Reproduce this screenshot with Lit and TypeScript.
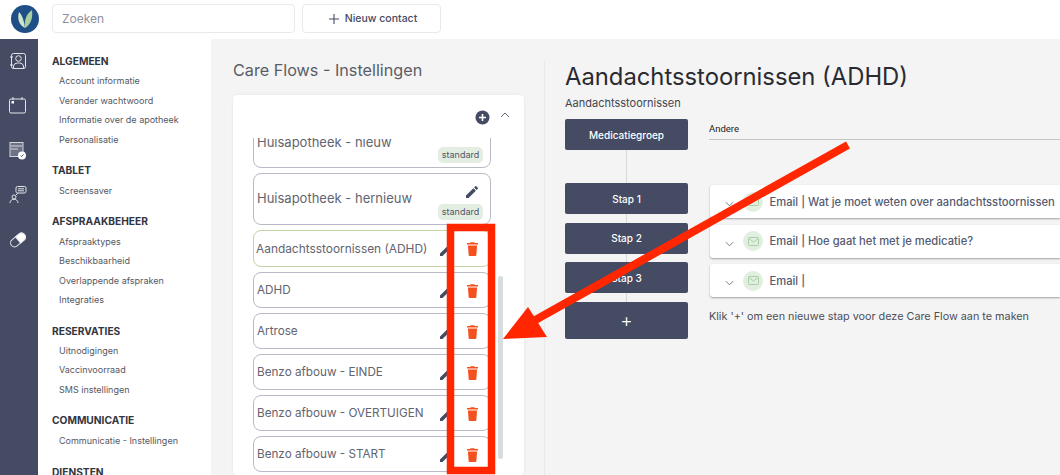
import { LitElement, html, css, svg } from "lit";
import { customElement } from "lit/decorators.js";

// sidebar content
const MENU = [
  { title: "ALGEMEEN", items: ["Account informatie", "Verander wachtwoord", "Informatie over de apotheek", "Personalisatie"] },
  { title: "TABLET", items: ["Screensaver"] },
  { title: "AFSPRAAKBEHEER", items: ["Afspraaktypes", "Beschikbaarheid", "Overlappende afspraken", "Integraties"] },
  { title: "RESERVATIES", items: ["Uitnodigingen", "Vaccinvoorraad", "SMS instellingen"] },
  { title: "COMMUNICATIE", items: ["Communicatie - Instellingen"] },
  { title: "DIENSTEN", items: [] as string[] },
];

const FLOWS = ["ADHD", "Artrose", "Benzo afbouw - EINDE", "Benzo afbouw - OVERTUIGEN", "Benzo afbouw - START"];

const MAILS = ["Email | Wat je moet weten over aandachtsstoornissen", "Email | Hoe gaat het met je medicatie?", "Email |"];

const pencil = html`<svg class="pencil" viewBox="0 0 24 24"><path d="M3 17.25V21h3.75L17.81 9.94l-3.75-3.75L3 17.25zM20.71 7.04a1 1 0 0 0 0-1.41l-2.34-2.34a1 1 0 0 0-1.41 0l-1.83 1.83 3.75 3.75 1.83-1.83z"/></svg>`;
const trash = html`<svg class="trash" viewBox="0 0 12 15"><path d="M4 0h4l.6 1H12v1.6H0V1h3.4L4 0zM1 3.6h10L10.2 14a1 1 0 0 1-1 1H2.8a1 1 0 0 1-1-1L1 3.6z"/></svg>`;
const chevron = html`<svg class="chev" viewBox="0 0 10 6"><path d="M1 1l4 4 4-4" fill="none" stroke="#666b7c" stroke-width="1"/></svg>`;

const railIcons = [
  svg`<rect x="3.5" y="1.5" width="14" height="15" rx="2"/><circle cx="10.5" cy="6.5" r="2.8"/><path d="M5.5 16.5v-2.5a4 4 0 0 1 4-3h2a4 4 0 0 1 4 3v2.5M2 5h3M2 13h3"/>`,
  svg`<rect x="1.5" y="3" width="16" height="14" rx="1.5"/><path d="M5 1v3M14 1v3"/><rect x="3.5" y="5" width="2.5" height="2.5" fill="#fff" stroke="none"/>`,
  svg`<rect x="2" y="1.5" width="13" height="14" fill="#6d7285" stroke="#d5d7de"/><path d="M3 5h11M3 8h7" stroke="#d5d7de"/><circle cx="14" cy="14.5" r="4" fill="#fff" stroke="none"/><path d="M12.5 14.5l1 1 2-2" stroke="#454b62"/>`,
  svg`<rect x="8" y="1.5" width="10" height="6.5" rx="1.5"/><path d="M10 3.8h6M10 5.8h6M10 8l-2 2"/><circle cx="6" cy="12" r="2"/><path d="M2 18c0-5 8-5 8 0"/>`,
  svg`<g transform="rotate(-40 10 10)"><rect x="1.5" y="6" width="17" height="8" rx="4"/><path d="M10 6h4.5a4 4 0 0 1 0 8H10z" fill="#fff"/></g>`,
];

@customElement("app-root")
export class AppRoot extends LitElement {
  static styles = css`
    :host {
      display: block;
      width: 1060px;
      height: 475px;
      overflow: hidden;
      position: relative;
      font-family: Inter, "Liberation Sans", sans-serif;
      background: #f4f4f4;
    }
    .top {
      display: flex;
      align-items: center;
      height: 39px;
      background: #fff;
      padding: 0 0 2px 11px;
      box-sizing: border-box;
    }
    .logo { width: 28px; height: 28px; margin-right: 13px; }
    .search {
      width: 243px;
      height: 29px;
      box-sizing: border-box;
      border: 1px solid #e9e9e9;
      border-radius: 4px;
      padding-left: 9px;
      display: flex;
      align-items: center;
      font-size: 12px;
      color: #8f91a0;
      margin-right: 7px;
    }
    .new {
      width: 139px;
      height: 29px;
      box-sizing: border-box;
      border: 1px solid #e9e9e9;
      border-radius: 4px;
      display: flex;
      align-items: center;
      justify-content: center;
      gap: 6px;
      padding-left: 3px;
      font-size: 10.5px;
      font-weight: 500;
      color: #454b62;
    }
    .new svg { width: 10px; height: 10px; }
    .body { display: flex; height: 436px; }
    .rail {
      width: 38px;
      flex: none;
      background: #454b62;
      display: flex;
      flex-direction: column;
      align-items: center;
      padding: 12.5px 0 0 0;
      box-sizing: border-box;
      gap: 24.5px;
    }
    .rail svg {
      width: 20px;
      height: 20px;
      fill: none;
      stroke: #e4e5ea;
      stroke-width: 1;
      margin-right: 2px;
    }
    .side {
      width: 173px;
      flex: none;
      background: #fff;
      padding: 16px 0 0 14px;
      box-sizing: border-box;
      overflow: hidden;
    }
    .group { margin-bottom: 18.7px; }
    .group h4 {
      margin: 0;
      font-size: 10.2px;
      line-height: 13px;
      font-weight: 700;
      color: #33353f;
    }
    .group a {
      display: block;
      margin: 6.4px 0 0 7px;
      font-size: 9px;
      line-height: 13px;
      color: #55575f;
      white-space: nowrap;
    }
    .flows { width: 334px; flex: none; box-sizing: border-box; padding: 21px 0 0 22px; }
    .flows h2 {
      margin: 0 0 15px;
      font-size: 16.2px;
      line-height: 20px;
      font-weight: 400;
      color: #5b5d66;
    }
    .panel {
      position: relative;
      width: 291px;
      height: 380px;
      background: #fff;
      border-radius: 4px;
      box-shadow: 0 0 3px rgba(0, 0, 0, 0.08);
      box-sizing: border-box;
      padding: 0 0 0 20px;
    }
    .tools {
      height: 43px;
      display: flex;
      align-items: center;
      justify-content: flex-end;
      gap: 9px;
      padding: 0 14px 0 0;
    }
    .tools .plus { width: 15px; height: 15px; margin-top: 1px; margin-right: 1px; }
    .tools .up { width: 10px; height: 6px; margin-bottom: 3px; }
    .list { height: 337px; width: 238px; overflow: hidden; display: flex; flex-direction: column; gap: 5px; }
    .row {
      flex: none;
      position: relative;
      box-sizing: border-box;
      height: 36px;
      border: 1px solid #b9bac6;
      border-radius: 8px;
      display: flex;
      align-items: center;
      padding-left: 3px;
      font-size: 11.7px;
      color: #62646f;
      white-space: nowrap;
    }
    .row .pencil { position: absolute; left: 184px; top: 11px; }
    .row .trash { position: absolute; left: 213px; top: 11px; }
    .pencil { width: 16px; height: 16px; fill: #454b62; }
    .trash { width: 11px; height: 14px; fill: #f4511e; }
    .row.big { height: 52px; font-size: 13px; padding-bottom: 2px; }
    .row.big .pencil { left: 210px; top: 10px; }
    .row.clip { height: 57px; margin-top: -27px; align-items: flex-start; padding-top: 22px; font-size: 13px; }
    .row.sel { height: 37px; border-color: #c3d4a5; padding-left: 2px; font-size: 11.9px; margin-bottom: 0.4px; }
    .badge {
      position: absolute;
      left: 184px;
      bottom: 4px;
      height: 16px;
      width: 45px;
      background: #e3ede2;
      border-radius: 5px;
      font-size: 9px;
      line-height: 16px;
      text-align: center;
      color: #55575f;
    }
    .thumb {
      position: absolute;
      left: 265px;
      top: 181px;
      width: 5px;
      height: 183px;
      border-radius: 3px;
      background: #d5dde0;
    }
    .rule { width: 1px; flex: none; background: #e9e9e9; height: 416px; margin-top: 21px; margin-left: -1px; }
    .detail { flex: 1; padding: 0 0 0 20px; min-width: 0; }
    .detail h1 {
      margin: 22px 0 0;
      font-size: 23.8px;
      line-height: 32px;
      font-weight: 400;
      color: #2a2b30;
      white-space: nowrap;
    }
    .detail .sub { font-size: 11px; line-height: 14px; margin-top: 3px; color: #44464f; }
    .grid { display: flex; margin-top: 9px; }
    .steps {
      width: 123px;
      flex: none;
      display: flex;
      flex-direction: column;
      position: relative;
    }
    .steps::before {
      content: "";
      position: absolute;
      left: 61px;
      top: 20px;
      width: 1px;
      height: 190px;
      background: #d9d9d9;
    }
    .step {
      position: relative;
      height: 31px;
      background: #454b62;
      border-radius: 2px;
      color: #fff;
      font-size: 10px;
      font-weight: 500;
      display: flex;
      align-items: center;
      justify-content: center;
      margin-bottom: 8.5px;
    }
    .step.first { margin-bottom: 33px; }
    .step.add { height: 37px; font-size: 19px; font-weight: 300; }
    .right { flex: 1; margin-left: 21px; min-width: 0; }
    .andere {
      height: 21px;
      box-sizing: border-box;
      border-bottom: 1px solid #c4c4c4;
      padding-top: 1px;
      font-family: Roboto, sans-serif;
      font-size: 9.5px;
      line-height: 18px;
      color: #222;
    }
    .cards { margin-top: 45px; display: flex; flex-direction: column; gap: 6.5px; }
    .card {
      height: 33px;
      background: #fff;
      border-radius: 3px 0 0 3px;
      box-shadow: 0 1px 2px rgba(0, 0, 0, 0.35);
      display: flex;
      align-items: center;
      padding-left: 15px;
      margin-left: 1px;
      font-size: 11.2px;
      font-weight: 500;
      color: #565a70;
      white-space: nowrap;
    }
    .chev { width: 9px; height: 6px; margin-top: 5px; flex: none; }
    .mail {
      width: 20px;
      height: 20px;
      border-radius: 50%;
      background: #e1eee0;
      margin: 0 6.5px 0 9px;
      display: flex;
      align-items: center;
      justify-content: center;
      flex: none;
    }
    .mail svg { width: 11px; height: 9px; }
    .hint { margin-top: 13px; font-size: 10.8px; line-height: 14px; color: #4c4e58; white-space: nowrap; }
    .mark { position: absolute; inset: 0; width: 1060px; height: 475px; pointer-events: none; }
  `;

  render() {
    return html`
      <div class="top">
        <svg class="logo" viewBox="0 0 28 28">
          <circle cx="14" cy="14" r="14" fill="#1f4f87"/>
          <path d="M8 7c-2 7 0 13 6 16-1-6-2-12-6-16z" fill="#cfe5c9"/>
          <path d="M21 5c1 8-1 14-7 18-1-7 1-14 7-18z" fill="#a9cf9f"/>
        </svg>
        <div class="search">Zoeken</div>
        <div class="new">
          <svg viewBox="0 0 11 11"><path d="M5.5 0v11M0 5.5h11" stroke="#454b62" stroke-width="1.2"/></svg>
          Nieuw contact
        </div>
      </div>
      <div class="body">
        <div class="rail">
          ${railIcons.map((i) => html`<svg viewBox="0 0 20 20">${i}</svg>`)}
        </div>
        <div class="side">
          ${MENU.map(
            (g) => html`<div class="group">
              <h4>${g.title}</h4>
              ${g.items.map((i) => html`<a>${i}</a>`)}
            </div>`
          )}
        </div>
        <div class="flows">
          <h2>Care Flows - Instellingen</h2>
          <div class="panel">
            <div class="tools">
              <svg class="plus" viewBox="0 0 15 15">
                <circle cx="7.5" cy="7.5" r="7" fill="#454b62"/>
                <path d="M7.5 4v7M4 7.5h7" stroke="#fff" stroke-width="1.6"/>
              </svg>
              <svg class="up" viewBox="0 0 10 6"><path d="M1 5l4-4 4 4" fill="none" stroke="#666b7c"/></svg>
            </div>
            <div class="list">
              <div class="row clip">Huisapotheek - nieuw<span class="badge">standard</span></div>
              <div class="row big">Huisapotheek - hernieuw ${pencil}<span class="badge">standard</span></div>
              <div class="row sel">Aandachtsstoornissen (ADHD) ${pencil} ${trash}</div>
              ${FLOWS.map((f) => html`<div class="row">${f} ${pencil} ${trash}</div>`)}
            </div>
            <div class="thumb"></div>
          </div>
        </div>
        <div class="rule"></div>
        <div class="detail">
          <h1>Aandachtsstoornissen (ADHD)</h1>
          <div class="sub">Aandachtsstoornissen</div>
          <div class="grid">
            <div class="steps">
              <div class="step first">Medicatiegroep</div>
              <div class="step">Stap 1</div>
              <div class="step">Stap 2</div>
              <div class="step">Stap 3</div>
              <div class="step add">+</div>
            </div>
            <div class="right">
              <div class="andere">Andere</div>
              <div class="cards">
                ${MAILS.map(
                  (m) => html`<div class="card">
                    ${chevron}
                    <span class="mail">
                      <svg viewBox="0 0 11 9"><rect x=".5" y=".5" width="10" height="8" rx="1" fill="none" stroke="#a8d0a6"/><path d="M1 1.5l4.5 3.5 4.5-3.5" fill="none" stroke="#a8d0a6"/></svg>
                    </span>
                    ${m}
                  </div>`
                )}
              </div>
              <div class="hint">Klik '+' om een nieuwe stap voor deze Care Flow aan te maken</div>
            </div>
          </div>
        </div>
      </div>
      <svg class="mark" viewBox="0 0 1060 475">
        <rect x="450.5" y="227.5" width="41" height="243" fill="none" stroke="#ff2600" stroke-width="7.5"/>
        <path d="M848 145L530 323" stroke="#ff2600" stroke-width="8" fill="none"/>
        <path d="M503 339L528 307L547 337z" fill="#ff2600"/>
      </svg>
    `;
  }
}
